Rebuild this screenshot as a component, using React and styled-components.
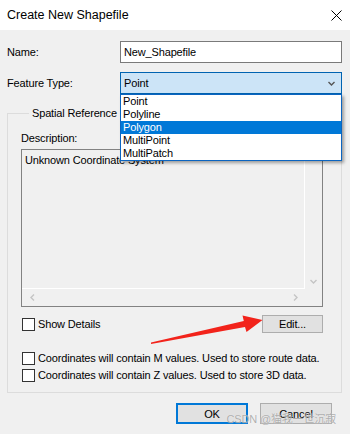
import React from 'react'
import styled, { createGlobalStyle } from 'styled-components'

const GlobalStyle = createGlobalStyle`
  body {
    margin: 0;
    font-family: "Liberation Sans", Arial, sans-serif;
    font-size: 11px;
    letter-spacing: -0.15px;
    color: #000;
  }
`

const Dialog = styled.div`
  position: relative;
  width: 350px;
  height: 434px;
  background: #f0f0f0;
  display: flex;
  flex-direction: column;
  overflow: hidden;
`

const TitleBar = styled.div`
  height: 30px;
  flex: 0 0 auto;
  background: #fff;
  display: flex;
  align-items: center;
  justify-content: space-between;
  padding: 0 8px 0 7px;
`

const Title = styled.span`
  font-size: 12.5px;
  letter-spacing: 0;
  margin-top: -1px;
`

const CloseIcon = () => (
  <svg width="11" height="11" viewBox="0 0 11 11">
    <path d="M0.5 0.5 L10.5 10.5 M10.5 0.5 L0.5 10.5" stroke="#000" strokeWidth="1" />
  </svg>
)

const Body = styled.div`
  padding: 11px 8px 0 7px;
  display: flex;
  flex-direction: column;
`

const FieldRow = styled.div`
  display: grid;
  grid-template-columns: 113px 1fr;
  align-items: center;
  height: 22px;
  margin-top: ${p => p.gap || 0}px;
`

const TextInput = styled.div`
  height: 22px;
  box-sizing: border-box;
  border: 1px solid #7a7a7a;
  background: #fff;
  padding-left: 3px;
  display: flex;
  align-items: center;
`

const SelectWrap = styled.div`
  position: relative;
`

const Select = styled.div`
  height: 22px;
  box-sizing: border-box;
  border: 1px solid #0063b1;
  background: #cce4f7;
  padding: 0 6px 0 3px;
  display: flex;
  align-items: center;
  justify-content: space-between;
`

const DropList = styled.div`
  position: absolute;
  top: 100%;
  left: 0;
  right: 0;
  z-index: 5;
  background: #fff;
  border: 1px solid #0b64c0;
  box-shadow: 2px 2px 3px rgba(0, 0, 0, 0.35);
`

const DropItem = styled.div`
  height: 13px;
  line-height: 13px;
  padding-left: 2px;
  background: ${p => (p.active ? '#0078d7' : 'transparent')};
  color: ${p => (p.active ? '#fff' : '#000')};
`

const Chevron = ({ dir = 'down', color = '#444', size = 7 }) => {
  const paths = {
    down: 'M0.5 1 L3.5 4 L6.5 1',
    up: 'M0.5 4 L3.5 1 L6.5 4',
    left: 'M4 0.5 L1 3.5 L4 6.5',
    right: 'M1 0.5 L4 3.5 L1 6.5'
  }
  const horizontal = dir === 'left' || dir === 'right'
  return (
    <svg
      width={horizontal ? 5 : size}
      height={horizontal ? size : 5}
      viewBox={horizontal ? '0 0 5 7' : '0 0 7 5'}
    >
      <path d={paths[dir]} fill="none" stroke={color} strokeWidth="1.4" />
    </svg>
  )
}

const Group = styled.fieldset`
  margin: 12px 0 0;
  padding: 0 18px 10px 13px;
  border: 1px solid #dcdcdc;
  min-width: 0;
`

const Legend = styled.legend`
  margin-left: 8px;
  padding: 0 3px;
  line-height: 14px;
`

const Label = styled.div`
  line-height: 14px;
  margin-top: ${p => p.gap || 0}px;
`

const TextArea = styled.div`
  margin-top: 4px;
  height: 158px;
  box-sizing: border-box;
  border: 1px solid #828282;
  display: grid;
  grid-template-columns: 1fr 17px;
  grid-template-rows: 1fr 17px;
`

const AreaContent = styled.div`
  border-right: 1px solid #fff;
  border-bottom: 1px solid #fff;
  padding: 3px 3px;
  line-height: 14px;
`

const VScroll = styled.div`
  display: flex;
  flex-direction: column;
  justify-content: space-between;
  align-items: center;
  padding: 6px 0 5px;
`

const HScroll = styled.div`
  display: flex;
  justify-content: space-between;
  align-items: center;
  padding: 0 7px 0 8px;
`

const CheckRow = styled.div`
  display: flex;
  align-items: center;
  justify-content: space-between;
  margin-top: ${p => p.gap || 0}px;
  height: ${p => p.h || 14}px;
`

const CheckLabel = styled.label`
  display: flex;
  align-items: center;
  gap: 3px;
  margin-left: 1px;
  line-height: 14px;
  white-space: nowrap;
`

const Box = styled.span`
  width: 13px;
  height: 13px;
  box-sizing: border-box;
  border: 1px solid #333;
  background: #fff;
  flex: 0 0 auto;
`

const Button = styled.div`
  width: ${p => p.w || 72}px;
  height: ${p => p.h || 21}px;
  box-sizing: border-box;
  background: #e1e1e1;
  border: ${p => (p.primary ? '2px solid #0078d7' : '1px solid #adadad')};
  display: flex;
  align-items: center;
  justify-content: center;
`

const Footer = styled.div`
  display: flex;
  justify-content: flex-end;
  gap: 12px;
  padding: 10px 10px 0 0;
`

const Overlay = styled.svg`
  position: absolute;
  left: 0;
  top: 0;
  pointer-events: none;
  z-index: 10;
`

const Watermark = styled.span`
  position: absolute;
  right: 14px;
  bottom: 8px;
  z-index: 10;
  font-family: "Liberation Sans", "Noto Sans CJK SC", sans-serif;
  font-size: 11px;
  color: rgba(150, 150, 150, 0.75);
  text-shadow: 0 0 1px rgba(255, 255, 255, 0.8);
`

const items = ['Point', 'Polyline', 'Polygon', 'MultiPoint', 'MultiPatch']

export default function App() {
  return (
    <Dialog>
      <GlobalStyle />
      <TitleBar>
        <Title>Create New Shapefile</Title>
        <CloseIcon />
      </TitleBar>
      <Body>
        <FieldRow>
          <span>Name:</span>
          <TextInput>New_Shapefile</TextInput>
        </FieldRow>
        <FieldRow gap={9}>
          <span>Feature Type:</span>
          <SelectWrap>
            <Select>
              <span>Point</span>
              <Chevron dir="down" color="#555" />
            </Select>
            <DropList>
              {items.map(it => (
                <DropItem key={it} active={it === 'Polygon'}>
                  {it}
                </DropItem>
              ))}
            </DropList>
          </SelectWrap>
        </FieldRow>
        <Group>
          <Legend>Spatial Reference</Legend>
          <Label gap={11}>Description:</Label>
          <TextArea>
            <AreaContent>Unknown Coordinate System</AreaContent>
            <VScroll>
              <Chevron dir="up" color="#c4c4c4" />
              <Chevron dir="down" color="#c4c4c4" />
            </VScroll>
            <HScroll>
              <Chevron dir="left" color="#c4c4c4" />
              <Chevron dir="right" color="#c4c4c4" />
            </HScroll>
            <div />
          </TextArea>
          <CheckRow gap={8} h={18}>
            <CheckLabel>
              <Box />
              Show Details
            </CheckLabel>
            <Button w={61} h={18}>Edit...</Button>
          </CheckRow>
          <CheckRow gap={18}>
            <CheckLabel>
              <Box />
              Coordinates will contain M values. Used to store route data.
            </CheckLabel>
          </CheckRow>
          <CheckRow gap={3}>
            <CheckLabel>
              <Box />
              Coordinates will contain Z values. Used to store 3D data.
            </CheckLabel>
          </CheckRow>
        </Group>
        <Footer>
          <Button primary>OK</Button>
          <Button>Cancel</Button>
        </Footer>
      </Body>
      <Overlay width="350" height="434" viewBox="0 0 350 434">
        <polygon
          points="151,344 245,327 246.5,332 262.5,320 242.5,315.5 243.8,321 151,342.6"
          fill="#f2231b"
        />
      </Overlay>
      <Watermark>CSDN @猫我一世沉寂</Watermark>
    </Dialog>
  )
}
